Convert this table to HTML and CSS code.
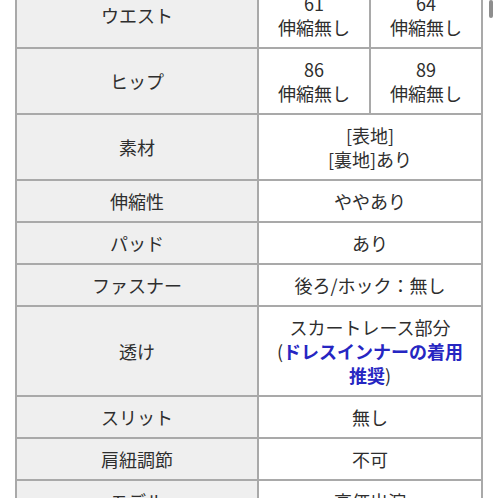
FILE: index.html
```html
<!DOCTYPE html>
<html lang="ja">
<head>
<meta charset="utf-8">
<link rel="stylesheet" href="styles.css">
</head>
<body>
<div class="page">
  <table class="spec">
    <colgroup>
      <col class="c-label">
      <col class="c-val">
      <col class="c-val">
    </colgroup>
    <tbody>
      <tr>
        <th>ウエスト</th>
        <td>61<br>伸縮無し</td>
        <td>64<br>伸縮無し</td>
      </tr>
      <tr>
        <th>ヒップ</th>
        <td>86<br>伸縮無し</td>
        <td>89<br>伸縮無し</td>
      </tr>
      <tr>
        <th>素材</th>
        <td colspan="2">[表地]<br>[裏地]あり</td>
      </tr>
      <tr>
        <th>伸縮性</th>
        <td colspan="2">ややあり</td>
      </tr>
      <tr>
        <th>パッド</th>
        <td colspan="2">あり</td>
      </tr>
      <tr>
        <th>ファスナー</th>
        <td colspan="2">後ろ/ホック：無し</td>
      </tr>
      <tr>
        <th>透け</th>
        <td colspan="2">スカートレース部分<br>(<span class="note">ドレスインナーの着用推奨</span>)</td>
      </tr>
      <tr>
        <th>スリット</th>
        <td colspan="2">無し</td>
      </tr>
      <tr>
        <th>肩紐調節</th>
        <td colspan="2">不可</td>
      </tr>
      <tr>
        <th>モデル</th>
        <td colspan="2">高価出演</td>
      </tr>
    </tbody>
  </table>
  <div class="scrollbar"></div>
</div>
</body>
</html>
```

FILE: styles.css
```css
html, body {
  margin: 0;
  padding: 0;
  background: #ffffff;
}

body {
  font-family: "Noto Sans CJK JP", "Noto Sans", "Liberation Sans", sans-serif;
  color: #2e2e2e;
  overflow: hidden;
  height: 498px;
}

.page {
  position: relative;
  width: 498px;
  height: 498px;
  overflow: hidden;
}

.spec {
  border-collapse: collapse;
  table-layout: fixed;
  width: 468px;
  margin: -19px 0 0 15px;
  font-size: 18px;
  line-height: 24px;
}

.c-label { width: 242px; }
.c-val { width: 112px; }

.spec th,
.spec td {
  border: 2px solid #a9a9a9;
  padding: 8px 12px;
  text-align: center;
  vertical-align: middle;
  font-weight: normal;
}

.spec th {
  background: #efefef;
}

.spec td {
  background: #ffffff;
}

.note {
  color: #2626c2;
  font-weight: bold;
}

.scrollbar {
  position: absolute;
  top: 0;
  left: 489px;
  width: 4px;
  height: 18px;
  border-radius: 2px;
  background: #8e8e8e;
}
```
